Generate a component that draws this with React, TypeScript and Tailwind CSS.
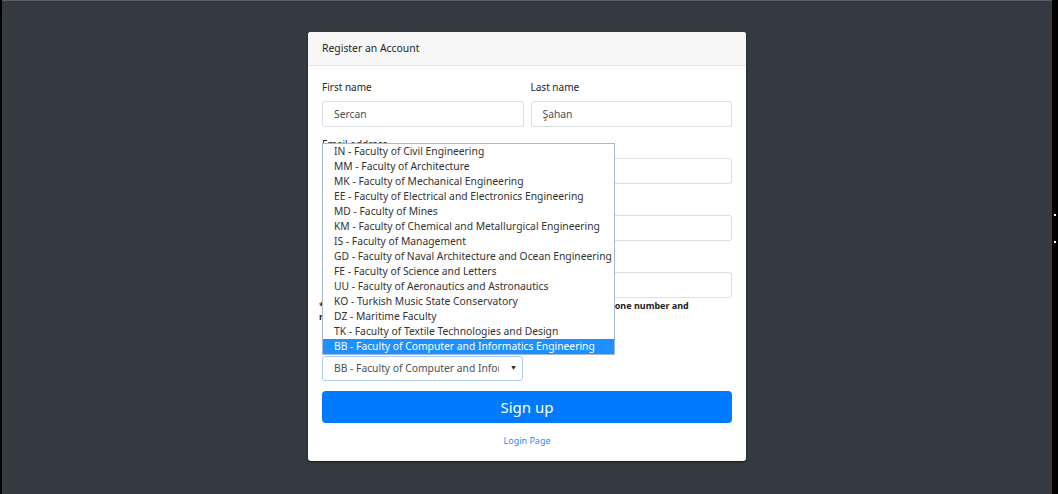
const faculties = [
  'IN - Faculty of Civil Engineering',
  'MM - Faculty of Architecture',
  'MK - Faculty of Mechanical Engineering',
  'EE - Faculty of Electrical and Electronics Engineering',
  'MD - Faculty of Mines',
  'KM - Faculty of Chemical and Metallurgical Engineering',
  'IS - Faculty of Management',
  'GD - Faculty of Naval Architecture and Ocean Engineering',
  'FE - Faculty of Science and Letters',
  'UU - Faculty of Aeronautics and Astronautics',
  'KO - Turkish Music State Conservatory',
  'DZ - Maritime Faculty',
  'TK - Faculty of Textile Technologies and Design',
  'BB - Faculty of Computer and Informatics Engineering',
]

const Field = ({ label, value = '', type = 'text' }: { label: string; value?: string; type?: string }) => (
  <div className="mb-[10px]">
    <label className="mb-[6px] block h-[15px] text-[10px] leading-[15px] text-[#212529]">{label}</label>
    <input
      type={type}
      defaultValue={value}
      readOnly
      className="block h-[26px] w-full rounded-[3px] border border-[#dadfe3] bg-white px-[11px] text-[10.3px] text-[#495057] outline-none"
    />
  </div>
)

export default function App() {
  return (
    <div className="flex h-[494px] w-[1058px] overflow-hidden bg-black font-['Noto_Sans',sans-serif]">
      <div className="w-[2px]" />
      <main className="flex-1 border-t border-[#5d6167] bg-[#353a41] pt-[31px]">
        <div className="mx-auto w-[438px] rounded-[3px] bg-white shadow-[0_1px_2px_rgba(0,0,0,0.6)]">
          <div className="flex h-[34px] items-center rounded-t-[3px] border-b border-[#e3e3e3] bg-[#f7f7f7] px-[14px] text-[10.4px] text-[#212529]">
            Register an Account
          </div>

          <div className="relative px-[14px] pt-[14px] pb-[13px]">
            <div className="grid grid-cols-2 gap-[7px]">
              <Field label="First name" value="Sercan" />
              <Field label="Last name" value="Şahan" />
            </div>
            <Field label="Email address" />
            <Field label="Username" />
            <Field label="Password (at least 8 characters long)" type="password" />
            <p className="-mt-[8px] mb-[13px] -ml-[3px] text-[9px] font-bold leading-[11px] text-[#222]">
              * Password must contain at least 10 characters, one capital letter, one number and
              <br />
              no special characters.
            </p>
            <div className="mb-[10px]">
              <label className="mb-[6px] block h-[15px] text-[10px] leading-[15px] text-[#212529]">Faculty</label>
              <div className="flex h-[25px] w-[201px] items-center rounded-[3px] border border-[#a9cdf3] pl-[11px] pr-[5px] text-[10.3px] text-[#495057]">
                <span className="w-[165px] overflow-hidden whitespace-nowrap">
                  BB - Faculty of Computer and Informatics Engineering
                </span>
                <span className="ml-auto text-[7px] text-[#222]">▼</span>
              </div>
            </div>

            <button className="flex h-[32px] w-full items-center justify-center rounded-[4px] bg-[#007bff] text-[15px] text-white">
              Sign up
            </button>
            <div className="mt-[11px] text-center text-[9px] text-[#2b8cff]">Login Page</div>

            <ul className="absolute left-[14px] top-[77px] w-[293px] border border-[#a3b9d9] bg-white">
              {faculties.map((f, i) => (
                <li
                  key={f}
                  className={
                    i === faculties.length - 1
                      ? 'h-[15px] whitespace-nowrap bg-[#1e90ff] pl-[11px] text-[10.3px] leading-[15px] text-white'
                      : 'h-[15px] whitespace-nowrap pl-[11px] text-[10.3px] leading-[15px] text-[#333]'
                  }
                >
                  {f}
                </li>
              ))}
            </ul>
          </div>
        </div>
      </main>
      <div className="flex w-[6px] flex-col items-center pt-[214px]">
        <div className="h-[2px] w-[2px] bg-white" />
        <div className="mt-[25px] h-[2px] w-[2px] bg-white" />
      </div>
    </div>
  )
}
